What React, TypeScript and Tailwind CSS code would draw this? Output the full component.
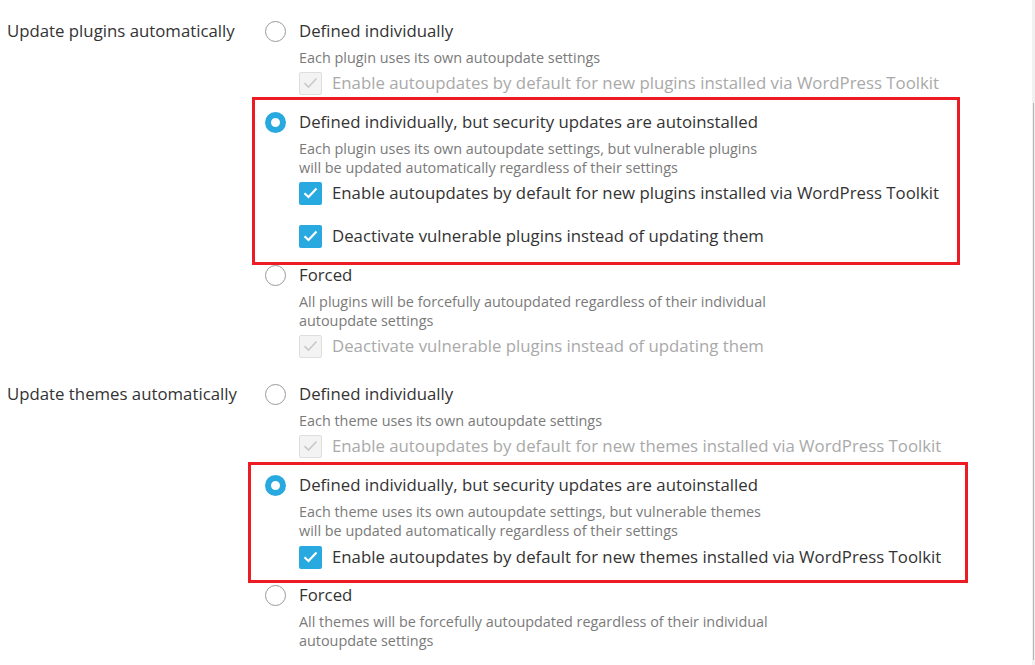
import React from 'react';

const Radio = ({ checked }: { checked?: boolean }) =>
    checked ? (
        <span className="w-[21px] h-[21px] rounded-full border-[6.5px] border-[#28aae1] bg-white shrink-0" />
    ) : (
        <span className="w-[21px] h-[21px] rounded-full border border-[#9a9a9a] bg-white shrink-0" />
    );

const Check = ({ checked, disabled, label }: { checked?: boolean; disabled?: boolean; label: string }) => (
    <div className="flex items-center h-[22px] gap-[10px]">
        {disabled ? (
            <span className="w-[23px] h-[23px] rounded-[2px] border border-[#dedede] bg-[#f3f3f3] flex items-center justify-center shrink-0">
                <svg width="15" height="12" viewBox="0 0 15 12" fill="none">
                    <path d="M1.5 6.2 L5.5 10 L13.5 1.5" stroke="#c9c9c9" strokeWidth="1.6" />
                </svg>
            </span>
        ) : (
            <span className={`w-[23px] h-[23px] rounded-[2px] flex items-center justify-center shrink-0 ${checked ? 'bg-[#28aae1]' : 'bg-white border border-[#999]'}`}>
                <svg width="15" height="12" viewBox="0 0 15 12" fill="none">
                    <path d="M1.5 6.2 L5.5 10 L13.5 1.5" stroke="#ffffff" strokeWidth="2.2" />
                </svg>
            </span>
        )}
        <span className={`text-[16.8px] leading-[22px] whitespace-nowrap ${disabled ? 'text-[#a9a9a9]' : 'text-[#333]'}`}>{label}</span>
    </div>
);

const Option = ({ checked, title, desc, children, loose }: { checked?: boolean; title: string; desc: React.ReactNode; children?: React.ReactNode; loose?: boolean }) => (
    <div>
        <div className="flex items-center h-[22px] gap-[13px]">
            <Radio checked={checked} />
            <span className="text-[16.8px] leading-[22px] text-[#333] whitespace-nowrap">{title}</span>
        </div>
        <div className="pl-[34px]">
            <p className="mt-[6px] text-[14.4px] leading-[19px] text-[#7a7a7a] whitespace-nowrap">{desc}</p>
            {children && <div className={`${loose ? 'mt-[6px]' : 'mt-[5px]'} flex flex-col gap-[21px]`}>{children}</div>}
        </div>
    </div>
);

const Highlight = ({ children, box }: { children: React.ReactNode; box: string }) => (
    <div className="relative">
        <div className={`absolute border-[3px] border-[#ed1c24] pointer-events-none ${box}`} />
        {children}
    </div>
);

const App = () => {
    return (
        <div className="relative w-[1035px] h-[665px] bg-white overflow-hidden" style={{ fontFamily: '"Open Sans", sans-serif' }}>
            <div className="pl-[7px] pt-[20px] flex flex-col">
                <div className="flex">
                    <div className="w-[258px] text-[16.8px] leading-[22px] text-[#333] shrink-0">Update plugins automatically</div>
                    <div className="flex flex-col gap-[17px]">
                        <Option title="Defined individually" desc="Each plugin uses its own autoupdate settings">
                            <Check disabled label="Enable autoupdates by default for new plugins installed via WordPress Toolkit" />
                        </Option>
                        <Highlight box="-left-[13px] -top-[14px] w-[708px] h-[168px]">
                            <Option
                                checked
                                title="Defined individually, but security updates are autoinstalled"
                                desc={<>Each plugin uses its own autoupdate settings, but vulnerable plugins<br />will be updated automatically regardless of their settings</>}
                            >
                                <Check checked label="Enable autoupdates by default for new plugins installed via WordPress Toolkit" />
                                <Check checked label="Deactivate vulnerable plugins instead of updating them" />
                            </Option>
                        </Highlight>
                        <Option
                            title="Forced"
                            desc={<>All plugins will be forcefully autoupdated regardless of their individual<br />autoupdate settings</>}
                        >
                            <Check disabled label="Deactivate vulnerable plugins instead of updating them" />
                        </Option>
                    </div>
                </div>

                <div className="flex mt-[26px]">
                    <div className="w-[258px] text-[16.8px] leading-[22px] text-[#333] shrink-0">Update themes automatically</div>
                    <div className="flex flex-col gap-[16px]">
                        <div className="mb-[1px]">
                            <Option title="Defined individually" desc="Each theme uses its own autoupdate settings">
                                <Check disabled label="Enable autoupdates by default for new themes installed via WordPress Toolkit" />
                            </Option>
                        </div>
                        <Highlight box="-left-[17px] -top-[12px] w-[720px] h-[121px]">
                            <Option
                                checked
                                loose
                                title="Defined individually, but security updates are autoinstalled"
                                desc={<>Each theme uses its own autoupdate settings, but vulnerable themes<br />will be updated automatically regardless of their settings</>}
                            >
                                <Check checked label="Enable autoupdates by default for new themes installed via WordPress Toolkit" />
                            </Option>
                        </Highlight>
                        <Option
                            title="Forced"
                            desc={<>All themes will be forcefully autoupdated regardless of their individual<br />autoupdate settings</>}
                        />
                    </div>
                </div>
            </div>

            {/* scrollbar */}
            <div className="absolute top-0 right-0 w-[3px] h-full bg-[#f1f1f1]">
                <div className="absolute left-[1px] top-[103px] w-[1px] h-[557px] bg-[#b5b5b5]" />
            </div>
        </div>
    );
};

export default App;
